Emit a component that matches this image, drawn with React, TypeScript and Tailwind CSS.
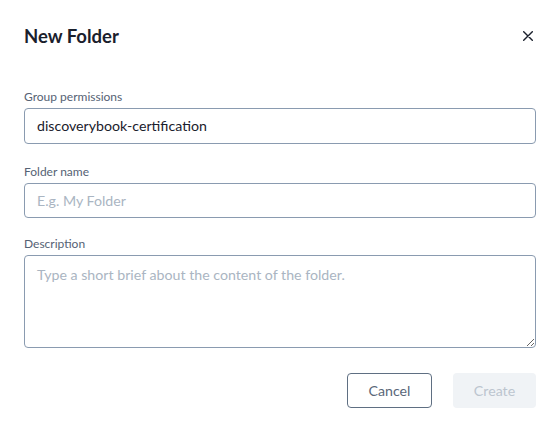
export default function App() {
  return (
    <div
      className="w-[560px] h-[433px] bg-white px-6 pt-6 text-[#1a202c]"
      style={{ fontFamily: 'Lato, "Noto Sans", sans-serif' }}
    >
      {/* header */}
      <div className="flex items-center justify-between h-6">
        <h2 className="text-[18.5px] font-bold leading-6 text-[#1a202c]">New Folder</h2>
        <button type="button" className="w-4 h-4 flex items-center justify-center text-[#1a202c]">
          <svg width="10" height="10" viewBox="0 0 10 10" fill="none" stroke="currentColor" strokeWidth="1.4" strokeLinecap="round">
            <path d="M0.7 0.7 L9.3 9.3 M9.3 0.7 L0.7 9.3" />
          </svg>
        </button>
      </div>

      <div className="mt-[41px]">
        <label className="block text-[12px] leading-4 text-[#556274] mb-[3px]">Group permissions</label>
        <div className="h-9 w-full border border-[#8a9bb0] rounded-[4px] px-3 flex items-center text-[14.2px] text-[#1a202c]">
          discoverybook-certification
        </div>
      </div>

      <div className="mt-5">
        <label className="block text-[12px] leading-4 text-[#556274] mb-[3px]">Folder name</label>
        <input
          className="h-[35px] w-full border border-[#8a9bb0] rounded-[4px] px-3 text-[14.2px] outline-none placeholder:text-[#aab5c2]"
          placeholder="E.g. My Folder"
        />
      </div>

      <div className="mt-[18px]">
        <label className="block text-[12px] leading-4 text-[#556274] mb-[3px]">Description</label>
        <textarea
          className="block h-[93px] w-full border border-[#8a9bb0] rounded-[4px] px-3 py-[9px] text-[14.2px] leading-5 outline-none placeholder:text-[#aab5c2]"
          placeholder="Type a short brief about the content of the folder."
        />
      </div>

      <div className="flex justify-end gap-[21px] mt-[25px]">
        <button
          type="button"
          className="w-[85px] h-[35px] border border-[#5f6f82] rounded-[4px] text-[14.2px] text-[#5a6779]"
        >
          Cancel
        </button>
        <button
          type="button"
          disabled
          className="w-[83px] h-[35px] rounded-[4px] bg-[#f0f3f6] text-[14.2px] text-[#bcc5cf]"
        >
          Create
        </button>
      </div>
    </div>
  );
}
